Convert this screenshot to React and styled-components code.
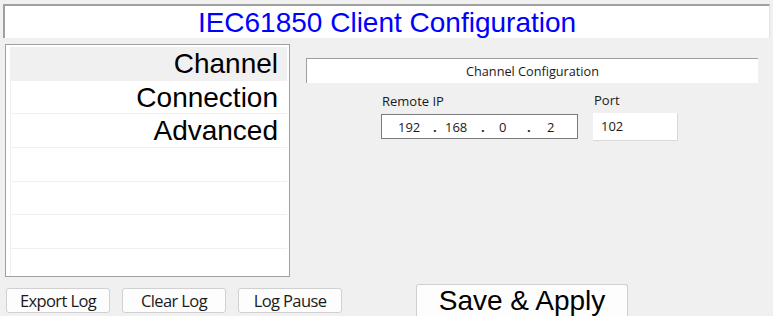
import React from 'react'
import styled, { createGlobalStyle } from 'styled-components'

const GlobalStyle = createGlobalStyle`
  html, body {
    margin: 0;
    padding: 0;
    background: #f0f0f0;
    overflow: hidden;
  }
`

const Page = styled.div`
  width: 773px;
  height: 316px;
  display: flex;
  flex-direction: column;
  font-family: "Liberation Sans", Arial, sans-serif;
`

const TitleBar = styled.div`
  margin: 4px 3px 0 3px;
  height: 34px;
  background: #fff;
  border-top: 2px solid #a0a0a0;
  border-left: 2px solid #a0a0a0;
  border-right: 1px solid #e3e3e3;
  color: #0000ff;
  font-size: 28px;
  display: flex;
  align-items: center;
  justify-content: center;
  box-sizing: border-box;
  padding-top: 1px;
`

const Main = styled.div`
  display: flex;
  flex: 1;
  margin-top: 6px;
`

const LeftColumn = styled.div`
  width: 285px;
  flex-shrink: 0;
  margin-left: 5px;
  display: flex;
  flex-direction: column;
`

const ListBox = styled.div`
  height: 233px;
  box-sizing: border-box;
  border: 1px solid #a0a0a0;
  background: #fff;
  padding: 2px 2px 0 4px;
  overflow: hidden;
`

const ListInner = styled.div`
  border-left: 1px solid #f0f0f0;
  height: 100%;
`

const Row = styled.div`
  height: 33.7px;
  box-sizing: border-box;
  border-bottom: 1px solid #f0f0f0;
  background: ${p => (p.$selected ? '#f0f0f0' : '#fff')};
  color: #000;
  font-size: 28px;
  text-align: right;
  padding-right: 9px;
  line-height: 33px;
`

const ButtonRow = styled.div`
  display: flex;
  gap: 12px;
  margin-top: 11px;
  margin-left: 1px;
`

const SmallButton = styled.div`
  width: 104px;
  height: 25px;
  flex-shrink: 0;
  box-sizing: border-box;
  border: 1px solid #d0d0d0;
  border-radius: 3px;
  background: #fdfdfd;
  font-family: "Open Sans", "Noto Sans", sans-serif;
  font-size: 16.5px;
  letter-spacing: -0.6px;
  color: #1a1a1a;
  display: flex;
  align-items: center;
  justify-content: center;
`

const RightPanel = styled.div`
  flex: 1;
  margin-left: 16px;
  margin-right: 15px;
  display: flex;
  flex-direction: column;
`

const SectionHeader = styled.div`
  margin-top: 14px;
  height: 25px;
  box-sizing: border-box;
  background: #fff;
  border-top: 1px solid #a0a0a0;
  border-left: 1px solid #a0a0a0;
  font-family: "Open Sans", "Noto Sans", sans-serif;
  font-size: 12.7px;
  color: #1a1a1a;
  display: flex;
  align-items: center;
  justify-content: center;
`

const FieldRow = styled.div`
  display: flex;
  margin-left: 75px;
  margin-top: 8px;
`

const FieldGroup = styled.div`
  display: flex;
  flex-direction: column;
  margin-left: ${p => p.$offset || 0}px;
  margin-top: ${p => p.$top || 0}px;
`

const Label = styled.div`
  font-family: "Open Sans", "Noto Sans", sans-serif;
  font-size: 13px;
  color: #1a1a1a;
  height: 18px;
  line-height: 18px;
  padding-left: 1px;
  margin-bottom: ${p => p.$gap || 0}px;
`

const IpBox = styled.div`
  width: 197px;
  height: 25px;
  box-sizing: border-box;
  background: #fff;
  border: 1px solid #7a7a7a;
  display: flex;
  align-items: center;
  padding-left: 16px;
  font-family: "Open Sans", "Noto Sans", sans-serif;
  font-size: 13px;
  color: #1a1a1a;
`

const Octet = styled.span`
  display: inline-block;
  width: ${p => p.$w}px;
`

const Dot = styled.span`
  display: inline-block;
  width: ${p => p.$w}px;
  font-weight: bold;
`

const PortBox = styled.div`
  width: 85px;
  height: 28px;
  box-sizing: border-box;
  background: #fff;
  border-right: 1px solid #d8d8d8;
  border-bottom: 1px solid #d8d8d8;
  padding-left: 8px;
  line-height: 26px;
  font-family: "Open Sans", "Noto Sans", sans-serif;
  font-size: 13px;
  color: #1a1a1a;
`

const SaveButton = styled.div`
  margin-top: auto;
  margin-left: 110px;
  width: 212px;
  height: 36px;
  box-sizing: border-box;
  border: 1px solid #d0d0d0;
  border-bottom: none;
  border-radius: 3px 3px 0 0;
  background: #fdfdfd;
  font-size: 28px;
  color: #000;
  display: flex;
  justify-content: center;
  margin-bottom: -4px;
`

const items = ['Channel', 'Connection', 'Advanced', '', '', '', '']

export default function App() {
  return (
    <Page>
      <GlobalStyle />
      <TitleBar>IEC61850 Client Configuration</TitleBar>
      <Main>
        <LeftColumn>
          <ListBox>
            <ListInner>
              {items.map((t, i) => (
                <Row key={i} $selected={i === 0}>{t}</Row>
              ))}
            </ListInner>
          </ListBox>
          <ButtonRow>
            <SmallButton>Export Log</SmallButton>
            <SmallButton>Clear Log</SmallButton>
            <SmallButton>Log Pause</SmallButton>
          </ButtonRow>
        </LeftColumn>
        <RightPanel>
          <SectionHeader>Channel Configuration</SectionHeader>
          <FieldRow>
            <FieldGroup $top={1}>
              <Label $gap={4}>Remote IP</Label>
              <IpBox>
                <Octet $w={35}>192</Octet>
                <Dot $w={12}>.</Dot>
                <Octet $w={36}>168</Octet>
                <Dot $w={18}>.</Dot>
                <Octet $w={28}>0</Octet>
                <Dot $w={20}>.</Dot>
                <Octet $w={10}>2</Octet>
              </IpBox>
            </FieldGroup>
            <FieldGroup $offset={15}>
              <Label $gap={4}>Port</Label>
              <PortBox>102</PortBox>
            </FieldGroup>
          </FieldRow>
          <SaveButton>Save &amp; Apply</SaveButton>
        </RightPanel>
      </Main>
    </Page>
  )
}
